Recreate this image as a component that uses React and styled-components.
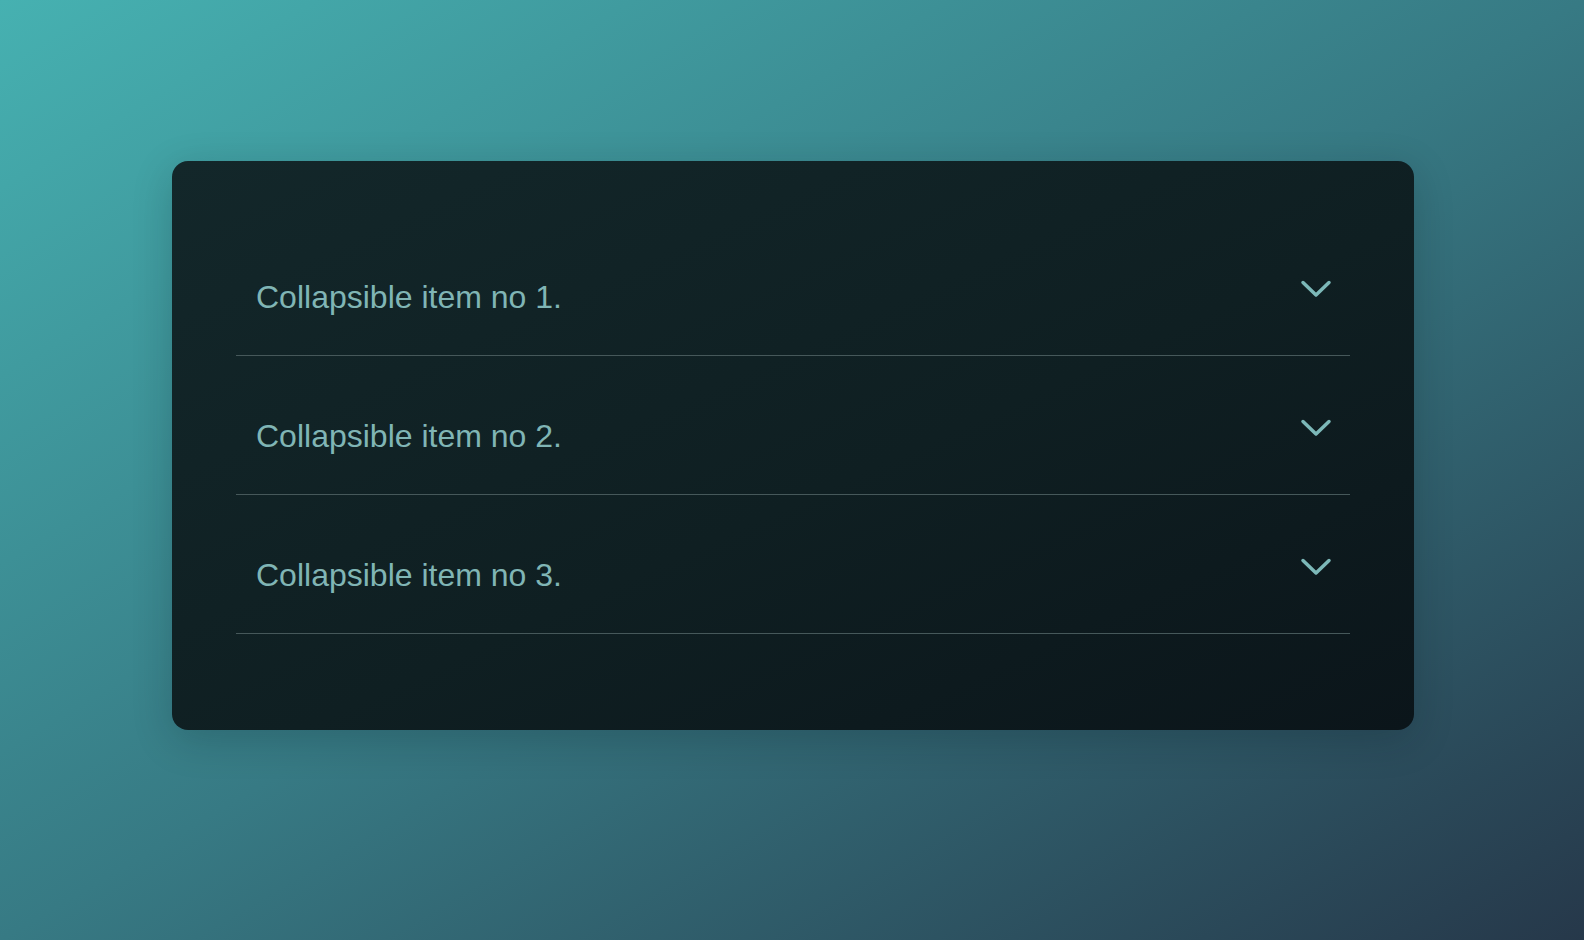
import React, { useState } from "react";
import styled, { createGlobalStyle } from "styled-components";

const GlobalStyle = createGlobalStyle`
  html, body {
    margin: 0;
    padding: 0;
    height: 100%;
  }

  body {
    font-family: "Liberation Sans", Arial, sans-serif;
    background: linear-gradient(to bottom right, #46b1b1 0%, #377a84 50%, #26384a 100%);
    min-height: 940px;
  }
`;

const Page = styled.div`
  display: flex;
  align-items: flex-start;
  justify-content: center;
  padding: 161px 0 0 2px;
  min-height: 940px;
  box-sizing: border-box;
`;

const Card = styled.div`
  width: 1242px;
  box-sizing: border-box;
  padding: 56px 64px 96px;
  border-radius: 16px;
  background: linear-gradient(to bottom right, #13272a 0%, #0f1f22 55%, #0b151a 100%);
  box-shadow: 0 10px 40px rgba(5, 20, 25, 0.2);
`;

const Item = styled.div`
  border-bottom: 1px solid #46585a;
`;

const Header = styled.button`
  display: flex;
  align-items: flex-start;
  justify-content: space-between;
  box-sizing: border-box;
  width: 100%;
  padding: 62px 18px 39px 20px;
  border: 0;
  background: transparent;
  cursor: pointer;
  text-align: left;
`;

const Title = styled.span`
  font-family: "Liberation Sans", Arial, sans-serif;
  font-size: 32px;
  line-height: 37px;
  color: #80b5b5;
`;

const Chevron = styled.svg`
  width: 32px;
  height: 20px;
  margin-top: 0;
  transform: ${({ $open }) => ($open ? "rotate(180deg)" : "none")};
  transition: transform 0.2s;
`;

const Body = styled.div`
  padding: 0 20px 32px;
  font-size: 18px;
  line-height: 1.5;
  color: #6f9a9a;
`;

const items = [
  "Collapsible item no 1.",
  "Collapsible item no 2.",
  "Collapsible item no 3.",
];

export default function App() {
  const [open, setOpen] = useState(null);

  return (
    <>
      <GlobalStyle />
      <Page>
        <Card>
          {items.map((title, i) => (
            <Item key={title}>
              <Header onClick={() => setOpen(open === i ? null : i)}>
                <Title>{title}</Title>
                <Chevron $open={open === i} viewBox="0 0 32 20" fill="none">
                  <path
                    d="M3 3.5 L16 16 L29 3.5"
                    stroke="#7cb8b8"
                    strokeWidth="3.5"
                    strokeLinecap="round"
                    strokeLinejoin="round"
                  />
                </Chevron>
              </Header>
              {open === i && <Body>Content of {title.toLowerCase()}</Body>}
            </Item>
          ))}
        </Card>
      </Page>
    </>
  );
}
